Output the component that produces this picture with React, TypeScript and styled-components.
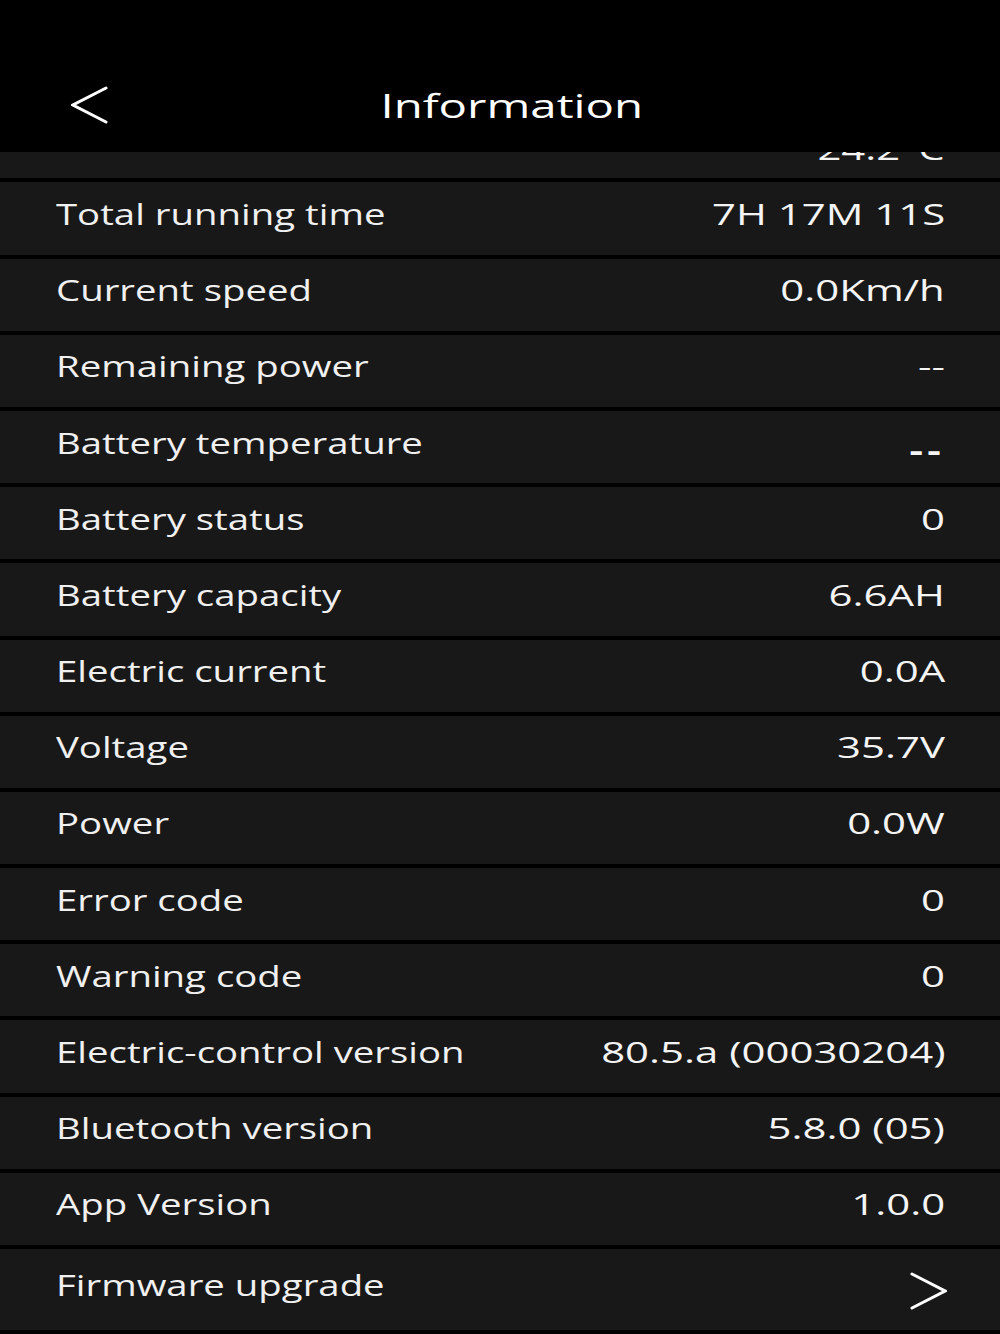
import React from "react";
import styled, { createGlobalStyle } from "styled-components";

interface InfoItem {
  label: string;
  value: string;
  strong?: boolean;
}

const items: InfoItem[] = [
  { label: "Total running time", value: "7H 17M 11S" },
  { label: "Current speed", value: "0.0Km/h" },
  { label: "Remaining power", value: "--" },
  { label: "Battery temperature", value: "--", strong: true },
  { label: "Battery status", value: "0" },
  { label: "Battery capacity", value: "6.6AH" },
  { label: "Electric current", value: "0.0A" },
  { label: "Voltage", value: "35.7V" },
  { label: "Power", value: "0.0W" },
  { label: "Error code", value: "0" },
  { label: "Warning code", value: "0" },
  { label: "Electric-control version", value: "80.5.a (00030204)" },
  { label: "Bluetooth version", value: "5.8.0 (05)" },
  { label: "App Version", value: "1.0.0" },
];

const GlobalStyle = createGlobalStyle`
  html, body {
    margin: 0;
    padding: 0;
    background: #000;
  }
  body {
    font-family: "Open Sans", "Noto Sans", sans-serif;
    color: #f4f4f4;
  }
`;

const Screen = styled.div`
  width: 1000px;
  height: 1334px;
  display: flex;
  flex-direction: column;
  background: #000;
  overflow: hidden;
`;

const Header = styled.header`
  flex-shrink: 0;
  height: 152px;
  box-sizing: border-box;
  padding: 58px 0 0;
  display: grid;
  grid-template-columns: 1fr auto 1fr;
  align-items: center;
  background: #000;
`;

const BackButton = styled.button`
  justify-self: start;
  margin-left: 71px;
  padding: 0;
  border: none;
  background: none;
  color: #fff;
  display: flex;
  cursor: pointer;
`;

// the app draws its text a little wide, so glyphs are stretched
const Title = styled.h1`
  margin: 0 0 0 24px;
  font-size: 32px;
  font-weight: normal;
  color: #fff;
  transform: scaleX(1.48);
`;

// list is anchored to the bottom, the top item slides under the header
const List = styled.div`
  flex: 1;
  min-height: 0;
  display: flex;
  flex-direction: column;
  justify-content: flex-end;
  overflow: hidden;
  padding-bottom: 4px;
  background: #000;
`;

const Row = styled.div<{ $h: number }>`
  flex-shrink: 0;
  height: ${({ $h }) => $h}px;
  box-sizing: border-box;
  border-top: 4px solid #000;
  padding: 0 55px 10px 56px;
  display: flex;
  align-items: center;
  justify-content: space-between;
  background: #181818;
`;

const Label = styled.span`
  display: inline-block;
  font-size: 29.5px;
  color: #f0f0f0;
  white-space: nowrap;
  transform: scaleX(1.3);
  transform-origin: left center;
`;

const Value = styled.span<{ $strong?: boolean }>`
  display: inline-block;
  font-size: 29.5px;
  font-weight: ${({ $strong }) => ($strong ? 700 : 400)};
  letter-spacing: ${({ $strong }) => ($strong ? "3px" : "0")};
  margin-top: ${({ $strong }) => ($strong ? "14px" : "0")};
  color: #f4f4f4;
  white-space: nowrap;
  transform: scaleX(1.42);
  transform-origin: right center;
`;

const Arrow = styled.span`
  display: flex;
  margin-top: 12px;
  margin-right: -2px;
  color: #fff;
`;

const Chevron = ({ dir }: { dir: "left" | "right" }) => (
  <svg width="38" height="38" viewBox="0 0 38 38" fill="none">
    <polyline
      points={dir === "left" ? "35,2 2,19 35,36" : "3,2 36,19 3,36"}
      stroke="currentColor"
      strokeWidth="3"
      strokeLinecap="round"
      strokeLinejoin="miter"
    />
  </svg>
);

const App = (): JSX.Element => {
  return (
    <Screen>
      <GlobalStyle />
      <Header>
        <BackButton aria-label="back">
          <Chevron dir="left" />
        </BackButton>
        <Title>Information</Title>
        <div />
      </Header>
      <List>
        <Row $h={54}>
          <Label />
          <Value>24.2°C</Value>
        </Row>
        {items.map((item) => (
          <Row key={item.label} $h={76.2}>
            <Label>{item.label}</Label>
            <Value $strong={item.strong}>{item.value}</Value>
          </Row>
        ))}
        <Row $h={85}>
          <Label>Firmware upgrade</Label>
          <Arrow>
            <Chevron dir="right" />
          </Arrow>
        </Row>
      </List>
    </Screen>
  );
};

export default App;
